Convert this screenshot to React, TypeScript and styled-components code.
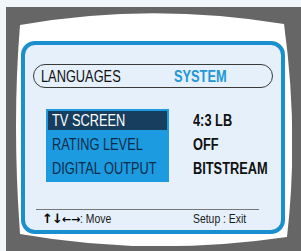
import React from "react";
import styled, { createGlobalStyle } from "styled-components";

const GlobalStyle = createGlobalStyle`
  html, body {
    margin: 0;
    padding: 0;
    background: #f1f6fa;
  }
  body {
    font-family: "Liberation Sans", Arial, sans-serif;
  }
`;

const settings = [
  { label: "TV SCREEN", value: "4:3 LB" },
  { label: "RATING LEVEL", value: "OFF" },
  { label: "DIGITAL OUTPUT", value: "BITSTREAM" },
];

const App: React.FC = () => {
  const active = 0;
  return (
    <>
      <GlobalStyle />
      <Frame>
        <Screen>
          <Panel>
            <TabPill>
              <Tab>
                <Narrow>LANGUAGES</Narrow>
              </Tab>
              <Tab $active>
                <Narrow>SYSTEM</Narrow>
              </Tab>
            </TabPill>
            <SettingsGrid>
              <MenuBox>
                {settings.map((s, i) => (
                  <MenuItem key={s.label} $active={i === active}>
                    <Narrow>{s.label}</Narrow>
                  </MenuItem>
                ))}
              </MenuBox>
              <ValueList>
                {settings.map((s, i) => (
                  <Value key={s.label} $first={i === 0}>
                    <Narrow>{s.value}</Narrow>
                  </Value>
                ))}
              </ValueList>
            </SettingsGrid>
            <Divider />
            <Footer>
              <Hint>
                <Arrows>↑↓</Arrows>
                <ThinArrows>←→</ThinArrows>
                <Narrow>: Move</Narrow>
              </Hint>
              <Hint>
                <Narrow>Setup : Exit</Narrow>
              </Hint>
            </Footer>
          </Panel>
        </Screen>
      </Frame>
    </>
  );
};

export default App;

const Frame = styled.div`
  margin: 7px 0 0 6px;
  width: 295px;
  height: 244px;
  background: #666666;
  padding: 6px 0 0 10px;
  box-sizing: border-box;
  overflow: hidden;
`;

const Screen = styled.div`
  width: 276px;
  height: 233px;
  background: #ffffff;
  clip-path: path("M4 12 Q134 -11 268 11 Q283 120 271 224 Q134 244 4 221 Q-4 110 4 12 Z");
  padding: 28px 7px 12px 5px;
  box-sizing: border-box;
`;

const Panel = styled.div`
  width: 264px;
  height: 193px;
  box-sizing: border-box;
  border: 4px solid #1a8fd0;
  border-radius: 14px;
  background: #e5f0fa;
  padding: 19px 8px 0 8px;
  display: flex;
  flex-direction: column;
`;

/* the set has a condensed face; squeeze Liberation Sans to its width */
const Narrow = styled.span`
  display: inline-block;
  transform: scaleX(0.8);
  transform-origin: left center;
  white-space: nowrap;
`;

const TabPill = styled.div`
  height: 24px;
  box-sizing: border-box;
  border: 1px solid #3a3a3a;
  border-radius: 12px;
  padding: 2px 0 0 7px;
  display: grid;
  grid-template-columns: 133px auto;
  line-height: 20px;
`;

const Tab = styled.span<{ $active?: boolean }>`
  font-size: 16px;
  font-weight: ${(p) => (p.$active ? 700 : 400)};
  color: ${(p) => (p.$active ? "#2196d8" : "#111111")};
`;

const SettingsGrid = styled.div`
  margin: 21px 0 0 13px;
  display: grid;
  grid-template-columns: 123px 1fr;
  column-gap: 24px;
`;

const MenuBox = styled.div`
  background: #1d9be0;
  padding: 2px 2px 4px 2px;
  display: flex;
  flex-direction: column;
  gap: 6px;
`;

const MenuItem = styled.div<{ $active?: boolean }>`
  height: ${(p) => (p.$active ? "19px" : "18px")};
  box-sizing: border-box;
  padding: ${(p) => (p.$active ? "1px" : "0")} 0 0 4px;
  line-height: 18px;
  font-size: 16px;
  color: ${(p) => (p.$active ? "#ffffff" : "#0d2b48")};
  background: ${(p) => (p.$active ? "#173e5e" : "transparent")};
`;

const ValueList = styled.div`
  padding: 2px 0 4px 0;
  display: flex;
  flex-direction: column;
  gap: 6px;
`;

const Value = styled.div<{ $first?: boolean }>`
  height: ${(p) => (p.$first ? "19px" : "18px")};
  box-sizing: border-box;
  padding-top: ${(p) => (p.$first ? "1px" : "0")};
  line-height: 18px;
  font-size: 16px;
  font-weight: 700;
  color: #111111;
`;

const Divider = styled.div`
  margin: 27px 14px 0 3px;
  height: 1px;
  background: #777777;
`;

const Footer = styled.div`
  display: grid;
  grid-template-columns: 151px 1fr;
  padding: 1px 0 0 9px;
`;

const Hint = styled.span`
  font-size: 13px;
  color: #1a1a1a;
  white-space: nowrap;
`;

const Arrows = styled.span`
  font-family: "DejaVu Sans", sans-serif;
  font-weight: 700;
  font-size: 13px;
  letter-spacing: -1px;
  color: #000;
`;

const ThinArrows = styled.span`
  font-family: "DejaVu Sans", sans-serif;
  font-weight: 700;
  font-size: 11px;
  color: #000;
`;
